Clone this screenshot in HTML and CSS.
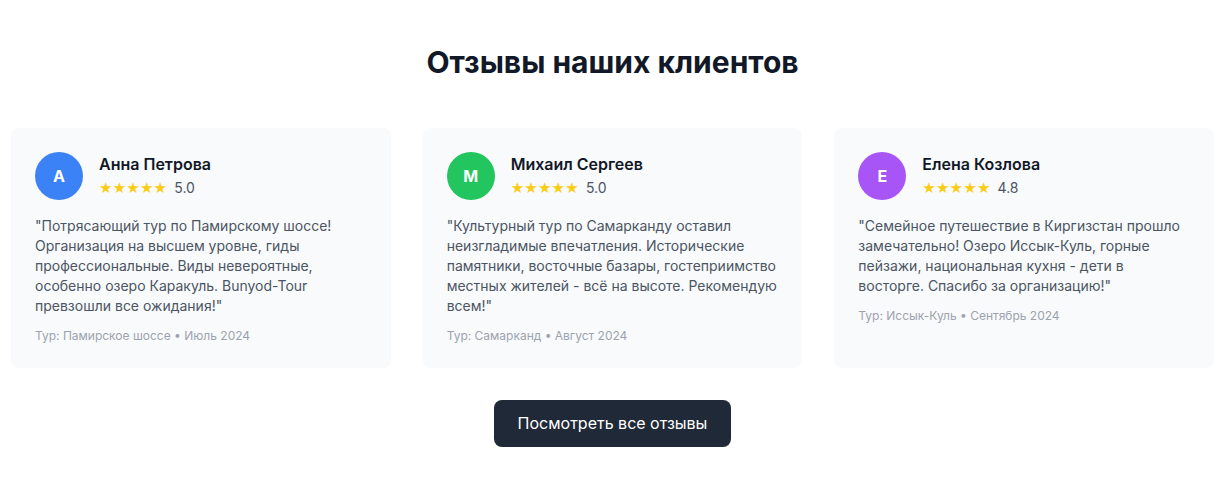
FILE: index.html
```html
<!DOCTYPE html>
<html lang="ru">
<head>
<meta charset="utf-8">
<title>Отзывы наших клиентов</title>
<link rel="stylesheet" href="styles.css">
</head>
<body>
<section class="reviews">
  <h2 class="reviews-title">Отзывы наших клиентов</h2>
  <div class="reviews-grid">
    <article class="card">
      <div class="card-head">
        <div class="avatar avatar-blue">А</div>
        <div class="who">
          <div class="name">Анна Петрова</div>
          <div class="rating"><span class="stars">★★★★★</span><span class="score">5.0</span></div>
        </div>
      </div>
      <p class="quote">"Потрясающий тур по Памирскому шоссе! Организация на высшем уровне, гиды профессиональные. Виды невероятные, особенно озеро Каракуль. Bunyod-Tour превзошли все ожидания!"</p>
      <div class="meta">Тур: Памирское шоссе • Июль 2024</div>
    </article>
    <article class="card">
      <div class="card-head">
        <div class="avatar avatar-green">М</div>
        <div class="who">
          <div class="name">Михаил Сергеев</div>
          <div class="rating"><span class="stars">★★★★★</span><span class="score">5.0</span></div>
        </div>
      </div>
      <p class="quote">"Культурный тур по Самарканду оставил неизгладимые впечатления. Исторические памятники, восточные базары, гостеприимство местных жителей - всё на высоте. Рекомендую всем!"</p>
      <div class="meta">Тур: Самарканд • Август 2024</div>
    </article>
    <article class="card">
      <div class="card-head">
        <div class="avatar avatar-purple">Е</div>
        <div class="who">
          <div class="name">Елена Козлова</div>
          <div class="rating"><span class="stars">★★★★★</span><span class="score">4.8</span></div>
        </div>
      </div>
      <p class="quote">"Семейное путешествие в Киргизстан прошло замечательно! Озеро Иссык-Куль, горные пейзажи, национальная кухня - дети в восторге. Спасибо за организацию!"</p>
      <div class="meta">Тур: Иссык-Куль • Сентябрь 2024</div>
    </article>
  </div>
  <div class="actions">
    <button class="btn">Посмотреть все отзывы</button>
  </div>
</section>
</body>
</html>
```
FILE: styles.css
```css
* { box-sizing: border-box; }
html, body {
  margin: 0;
  padding: 0;
  background: #ffffff;
  font-family: Inter, "Noto Sans", "DejaVu Sans", sans-serif;
  color: #111827;
}
.reviews {
  padding: 44px 14px 40px 11px;
}
.reviews-title {
  margin: 0 0 48px;
  text-align: center;
  font-size: 30px;
  line-height: 36px;
  font-weight: 700;
  color: #111827;
}
.reviews-grid {
  display: grid;
  grid-template-columns: repeat(3, 1fr);
  gap: 32px;
}
.card {
  background: #f9fafb;
  border-radius: 8px;
  padding: 24px;
}
.card-head {
  display: flex;
  align-items: flex-start;
  gap: 16px;
  margin-bottom: 16px;
}
.avatar {
  width: 48px;
  height: 48px;
  border-radius: 50%;
  display: flex;
  align-items: center;
  justify-content: center;
  color: #fff;
  font-weight: 700;
  font-size: 16px;
  flex-shrink: 0;
}
.avatar-blue { background: #3b82f6; }
.avatar-green { background: #22c55e; }
.avatar-purple { background: #a855f7; }
.name {
  font-size: 16px;
  line-height: 24px;
  font-weight: 600;
  color: #111827;
}
.rating {
  display: flex;
  align-items: center;
  font-size: 14px;
  line-height: 20px;
  margin-top: 2px;
}
.stars {
  color: #facc15;
  font-family: "DejaVu Sans", sans-serif;
  font-size: 15px;
  letter-spacing: 0.2px;
}
.score {
  margin-left: 7px;
  color: #4b5563;
}
.quote {
  margin: 0 0 12px;
  font-size: 14px;
  line-height: 20px;
  color: #4b5563;
}
.meta {
  font-size: 12px;
  line-height: 16px;
  color: #9ca3af;
}
.actions {
  display: flex;
  justify-content: center;
  margin-top: 32px;
}
.btn {
  background: #1f2937;
  color: #ffffff;
  border: 0;
  border-radius: 8px;
  padding: 12px 24px;
  font-family: inherit;
  font-size: 16px;
  line-height: 23px;
  font-weight: 400;
  cursor: pointer;
}
```
